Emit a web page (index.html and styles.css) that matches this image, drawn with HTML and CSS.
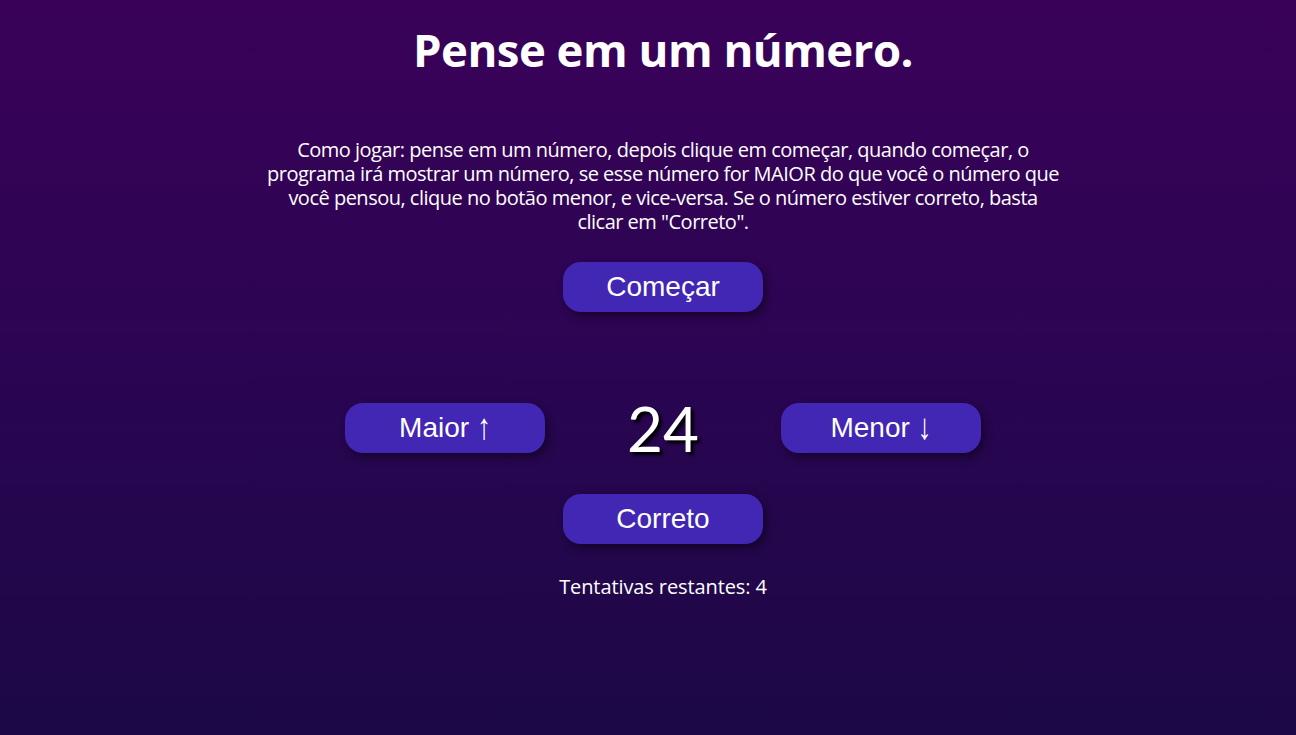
FILE: index.html
```html
<!DOCTYPE html>
<html lang="pt-BR">
<head>
<meta charset="utf-8">
<title>Pense em um número</title>
<link rel="stylesheet" href="styles.css">
</head>
<body>
<main class="game">
  <h1 class="title">Pense em um número.</h1>
  <p class="instructions">Como jogar: pense em um número, depois clique em começar, quando começar, o programa irá mostrar um número, se esse número for MAIOR do que você o número que você pensou, clique no botão menor, e vice-versa. Se o número estiver correto, basta clicar em "Correto".</p>
  <button class="btn btn-start">Começar</button>
  <div class="guess-row">
    <button class="btn">Maior <span class="arrow">↑</span></button>
    <div class="number">24</div>
    <button class="btn">Menor <span class="arrow">↓</span></button>
  </div>
  <button class="btn btn-correct">Correto</button>
  <p class="attempts">Tentativas restantes: 4</p>
</main>
</body>
</html>
```
FILE: styles.css
```css
html, body {
  margin: 0;
  padding: 0;
}
body {
  min-height: 100vh;
  background: linear-gradient(180deg, #3a0159 0%, #2a0552 50%, #1c0846 100%);
  color: #ffffff;
  font-family: "Open Sans", "Noto Sans", sans-serif;
}
.game {
  display: flex;
  flex-direction: column;
  align-items: center;
  padding-left: 30px;
  min-height: 735px;
  box-sizing: border-box;
}
.title {
  margin: 20px 0 0;
  font-size: 45.5px;
  line-height: 58px;
  font-weight: 700;
  letter-spacing: -0.5px;
}
.instructions {
  margin: 60px 0 0;
  width: 796px;
  text-align: center;
  font-size: 20px;
  line-height: 24px;
  letter-spacing: -0.5px;
}
.btn {
  width: 200px;
  height: 50px;
  border: none;
  border-radius: 18px;
  background: #4226b4;
  color: #ffffff;
  font-family: "Liberation Sans", Arial, sans-serif;
  font-size: 28px;
  box-shadow: 3px 4px 8px rgba(0, 0, 0, 0.45);
  padding: 0;
  cursor: pointer;
}
.arrow {
  display: inline-block;
  transform: scaleY(1.3);
  transform-origin: 50% 60%;
}
.btn-start {
  margin-top: 28px;
}
.guess-row {
  margin-top: 91px;
  display: flex;
  align-items: center;
}
.number {
  width: 236px;
  text-align: center;
  font-family: "Lato", "Open Sans", sans-serif;
  font-size: 62px;
  line-height: 50px;
  text-shadow: 3px 3px 3px #000000;
}
.btn-correct {
  margin-top: 41px;
}
.attempts {
  margin: 31px 0 0;
  font-size: 20px;
  line-height: 24px;
  letter-spacing: -0.1px;
}
```
